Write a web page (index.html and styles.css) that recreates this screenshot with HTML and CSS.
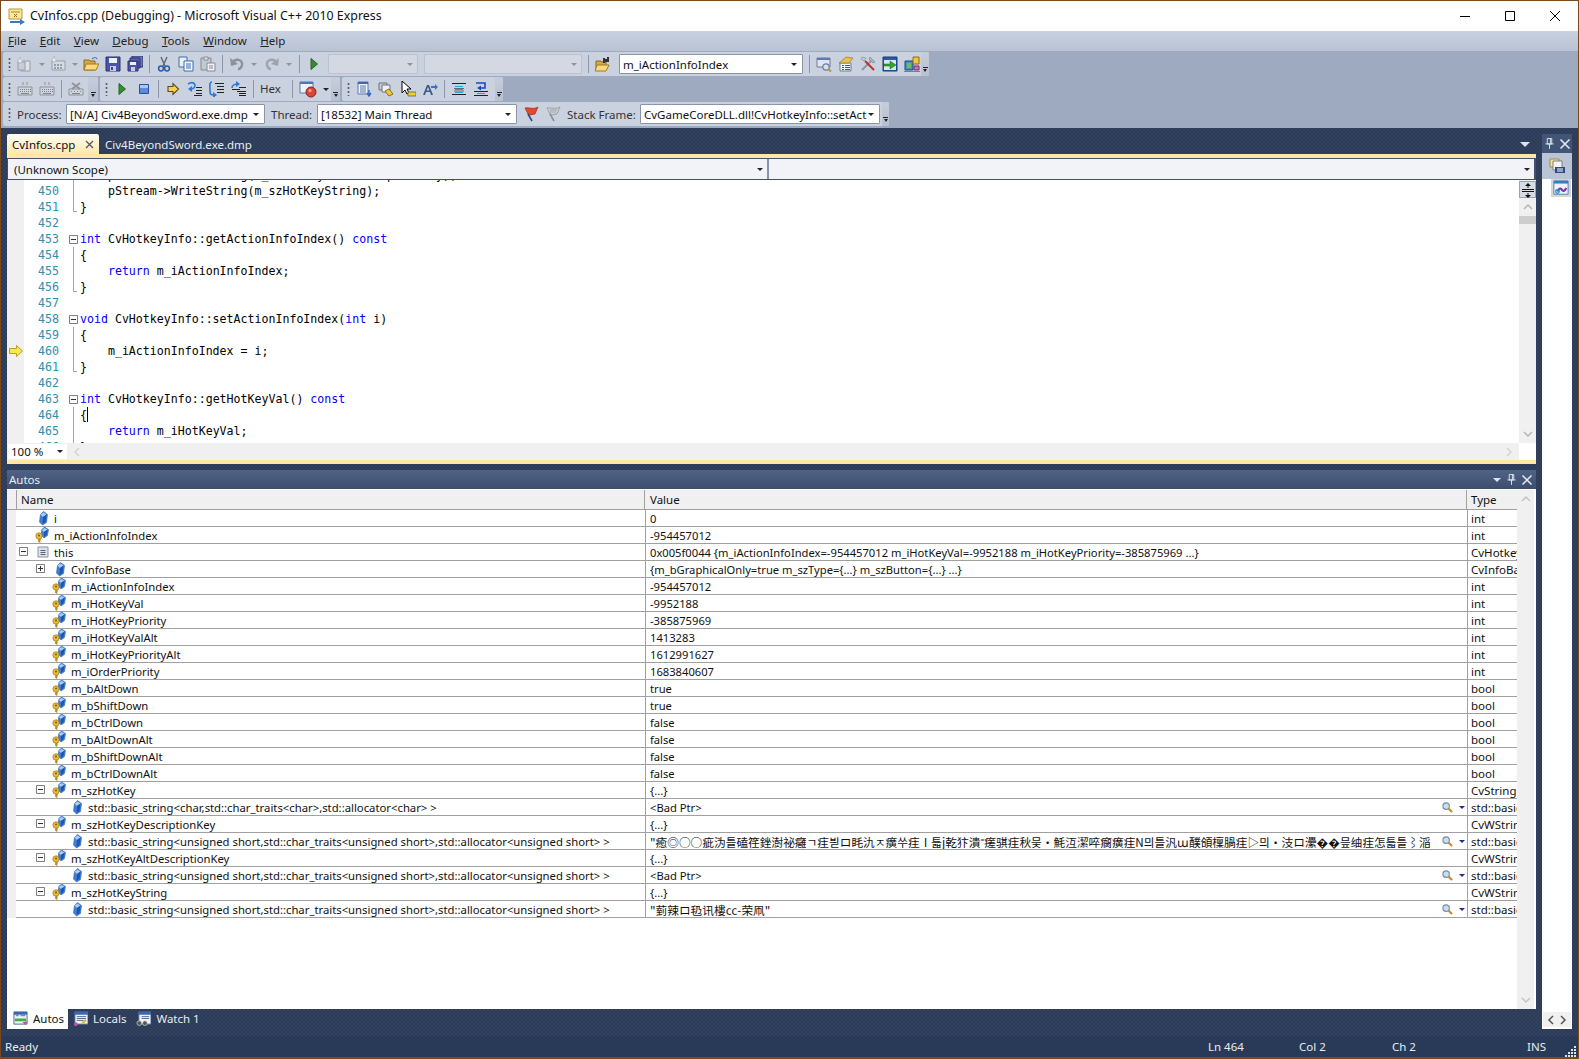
FILE: index.html
```html
<!DOCTYPE html>
<html lang="en">
<head>
<meta charset="utf-8">
<title>CvInfos.cpp (Debugging) - Microsoft Visual C++ 2010 Express</title>
<link rel="stylesheet" href="styles.css">
</head>
<body>
<svg class="defs" xmlns="http://www.w3.org/2000/svg">
  <symbol id="app" viewBox="0 0 18 18"><path d="M1 2h13v10H1z" fill="#f7e7a0" stroke="#b99a3a"/><path d="M3 4h9v2H3z" fill="#d8b84a"/><path d="M6 7l3 3M9 7l-3 3" stroke="#8a7020"/><path d="M2 14h10v-2l5 3-5 3v-2H2z" fill="#3a78c8"/></symbol>
  <symbol id="new" viewBox="0 0 16 16"><path d="M4 5h9v10H4z" fill="#e4e6ea" stroke="#8c929c"/><path d="M1 6h7v8H1z" fill="#c8ccd4" stroke="#8c929c"/><path d="M3 1l1 3 3 1-3 1-1 2-1-2-2-1 2-1z" fill="#f4f4f4" stroke="#9ea3ac" stroke-width=".5"/></symbol>
  <symbol id="add" viewBox="0 0 16 16"><path d="M2 5h13v9H2z" fill="#d9dce2" stroke="#8c929c"/><path d="M4 8h2v2H4zM7 8h2v2H7zM10 8h2v2h-2zM4 11h2v2H4zM7 11h2v2H7zM10 11h2v2h-2z" fill="#8c929c"/><path d="M4 0l1 3 2 1-2 1-1 2-1-2-2-1 2-1z" fill="#f4f4f4" stroke="#9ea3ac" stroke-width=".5"/></symbol>
  <symbol id="open" viewBox="0 0 16 16"><path d="M1 4h5l1 1h5v9H1z" fill="#d9a93c" stroke="#8a6a20"/><path d="M3 8h13l-3 6H1z" fill="#fbd978" stroke="#9a7a28"/><path d="M9 3c2-2 4-2 5 0" fill="none" stroke="#3a78c8" stroke-width="1.2"/></symbol>
  <symbol id="save" viewBox="0 0 16 16"><path d="M1 1h14v14H1z" fill="#4a55a8" stroke="#2b3270"/><path d="M4 2h8v5H4z" fill="#eef0f8"/><path d="M5 10h6v5H5z" fill="#c8cde0"/><path d="M6 11h2v3H6z" fill="#3a4490"/></symbol>
  <symbol id="saveall" viewBox="0 0 16 16"><path d="M5 0h11v11H5z" fill="#6a75b8" stroke="#2b3270"/><path d="M3 2h10v10H3z" fill="#5a65b0" stroke="#2b3270"/><path d="M1 5h10v10H1z" fill="#4a55a8" stroke="#2b3270"/><path d="M3 6h6v3H3z" fill="#eef0f8"/><path d="M4 11h4v4H4z" fill="#c8cde0"/></symbol>
  <symbol id="cut" viewBox="0 0 16 16"><path d="M5 1l4 9M11 1l-4 9" stroke="#5c6470" stroke-width="1.4" fill="none"/><circle cx="5" cy="12.5" r="2.4" fill="none" stroke="#2a5ca8" stroke-width="1.5"/><circle cx="11" cy="12.5" r="2.4" fill="none" stroke="#2a5ca8" stroke-width="1.5"/></symbol>
  <symbol id="copy" viewBox="0 0 16 16"><path d="M1 1h8v10H1z" fill="#e8f0fc" stroke="#3a6ab0"/><path d="M6 5h9v10H6z" fill="#f4f8ff" stroke="#3a6ab0"/><path d="M8 8h5M8 10h5M8 12h5" stroke="#3a6ab0"/></symbol>
  <symbol id="paste" viewBox="0 0 16 16"><path d="M1 2h10v12H1z" fill="#c4c8cf" stroke="#858a94"/><path d="M4 1h4v3H4z" fill="#e8e8e8" stroke="#858a94"/><path d="M7 7h8v8H7z" fill="#eff0f3" stroke="#858a94"/><path d="M9 10h4M9 12h4" stroke="#858a94"/></symbol>
  <symbol id="undo" viewBox="0 0 16 16"><path d="M3 7c3-5 11-4 10 2-.4 2-2 4-4 4" fill="none" stroke="#8c929c" stroke-width="2.4"/><path d="M1 2l1 8 7-2z" fill="#8c929c"/></symbol>
  <symbol id="redo" viewBox="0 0 16 16"><path d="M13 7C10 2 2 3 3 9c.4 2 2 4 4 4" fill="none" stroke="#9ea3ac" stroke-width="2.4"/><path d="M15 2l-1 8-7-2z" fill="#9ea3ac"/></symbol>
  <symbol id="play" viewBox="0 0 16 16"><path d="M5 2.500l6.500 5.500-6.500 5.500z" fill="#3a8a30" stroke="#1e6a20"/></symbol>
  <symbol id="stop" viewBox="0 0 16 16"><path d="M3.500 3.500h9v9h-9z" fill="#5a8ad8" stroke="#2a52a0"/><path d="M4 4h8v3H4z" fill="#a9c6f2"/></symbol>
  <symbol id="findf" viewBox="0 0 16 16"><path d="M1 5h5l1 1h4v8H1z" fill="#d9a93c" stroke="#8a6a20"/><path d="M2 9h12l-3 6H0z" fill="#fbd978" stroke="#9a7a28"/><path d="M8 2h2v5H8zM12 1h2v5h-2zM9 3h4v3H9z" fill="#333"/></symbol>
  <symbol id="t1" viewBox="0 0 16 16"><path d="M1 2h13v9H1z" fill="#dfe6f2" stroke="#6c7a96"/><path d="M1 2h13v2H1z" fill="#5a7ab0"/><circle cx="10" cy="11" r="3.200" fill="#cfe3f8" stroke="#6c7a96" stroke-width="1.200"/><path d="M12 13l3 2.500" stroke="#c09030" stroke-width="2"/></symbol>
  <symbol id="t2" viewBox="0 0 16 16"><path d="M2 7h11v8H2z" fill="#f4f6fa" stroke="#6c7a96"/><path d="M4 9h2v1H4zM7 9h5v1H7zM4 11h2v1H4zM7 11h5v1H7zM4 13h2v1H4zM7 13h5v1H7z" fill="#3a5a9a"/><path d="M1 7l7-6 7 1-4 5z" fill="#e8c050" stroke="#9a7a28" stroke-width=".7"/></symbol>
  <symbol id="t3" viewBox="0 0 16 16"><path d="M2 14L12 4" stroke="#8e96a4" stroke-width="2"/><path d="M10 1l5 5-2 1-4-4z" fill="#aeb4c0" stroke="#6c7480" stroke-width=".5"/><path d="M14 14L5 5" stroke="#c0302a" stroke-width="2"/><path d="M2 1l4 1-2 3-3-2z" fill="#c8ccd4" stroke="#6c7480" stroke-width=".5"/></symbol>
  <symbol id="t4" viewBox="0 0 16 16"><path d="M1 1h14v14H1z" fill="#2a5aa8" stroke="#1a3a78"/><path d="M2 4h12v10H2z" fill="#dbe6f6"/><path d="M2 8h6V5l6 4-6 4v-3H2z" fill="#2aa82a" stroke="#156a15" stroke-width=".5"/></symbol>
  <symbol id="t5" viewBox="0 0 16 16"><path d="M1 5h8v9H1z" fill="#4a90c8" stroke="#1a4a7a"/><path d="M3 7h4v5H3z" fill="#70c050"/><path d="M9 1h6v7H9z" fill="#f0c840" stroke="#8a6a18"/><path d="M10 10h5v4h-5z" fill="#d070c0" stroke="#7a2a78"/><path d="M0 15h16v1H0z" fill="#7a8088"/></symbol>
  <symbol id="kb" viewBox="0 0 16 16"><path d="M1 6h14v8H1z" fill="#d2d5dc" stroke="#8c929c"/><path d="M3 8h1v1H3zM5 8h1v1H5zM7 8h1v1H7zM9 8h1v1H9zM11 8h1v1h-1zM13 8h1v1h-1zM3 10h1v1H3zM5 10h1v1H5zM7 10h1v1H7zM9 10h1v1H9zM11 10h1v1h-1zM13 10h1v1h-1zM4 12h8v1H4z" fill="#7e848e"/><path d="M5 1h2v3H5zM9 1h2v3H9z" fill="#aeb2ba"/></symbol>
  <symbol id="kbx" viewBox="0 0 16 16"><path d="M1 8h14v6H1z" fill="#d2d5dc" stroke="#8c929c"/><path d="M3 10h1v1H3zM6 10h1v1H6zM9 10h1v1H9zM12 10h1v1h-1zM4 12h8v1H4z" fill="#7e848e"/><path d="M4 2l8 6M12 2L4 8" stroke="#8e939c" stroke-width="1.800"/></symbol>
  <symbol id="next" viewBox="0 0 16 16"><path d="M3 5.500h5V2.500L13.500 8 8 13.500V10.500H3z" fill="#f6d050" stroke="#5a4a20" stroke-width="1.100"/></symbol>
  <symbol id="stepin" viewBox="0 0 16 16"><path d="M1 3c3-2 6-2 7 1 0 3-2 4-5 4" fill="none" stroke="#2a78d8" stroke-width="1.600"/><path d="M1 8l4-3v6z" fill="#2a78d8"/><path d="M9 6h6v1H9zM9 9h6v1H9zM9 12h6v1H9zM7 14h8v1H7z" fill="#222"/></symbol>
  <symbol id="stepover" viewBox="0 0 16 16"><path d="M3 1C0 1 1 5 1 9s0 5 4 5" fill="none" stroke="#2a78d8" stroke-width="1.600"/><path d="M8 14l-4-3v6z" fill="#2a78d8"/><path d="M6 2h9v1H6zM8 5h7v1H8zM8 8h7v1H8zM8 11h7v1H8z" fill="#222"/></symbol>
  <symbol id="stepout" viewBox="0 0 16 16"><path d="M1 7c0-3 3-4 6-4" fill="none" stroke="#2a78d8" stroke-width="1.600"/><path d="M9 3L5 0v6z" fill="#2a78d8"/><path d="M1 8h8v1H1zM8 6h7v1H8zM6 10h9v1H6zM8 12h7v1H8zM8 14h7v1H8z" fill="#222"/></symbol>
  <symbol id="bp" viewBox="0 0 18 18"><path d="M1 2h13v11H1z" fill="#eef2fa" stroke="#5a78a8"/><path d="M1 2h13v2H1z" fill="#4a78c0"/><circle cx="12" cy="12" r="5" fill="#d84838" stroke="#8a2018"/><circle cx="11" cy="10.500" r="1.600" fill="#f2a090"/></symbol>
  <symbol id="m1" viewBox="0 0 16 16"><path d="M2 1h10v12H2z" fill="#eef3fb" stroke="#5a78a8"/><path d="M2 1h10v2H2z" fill="#3a68b0"/><path d="M4 5h6M4 7h6M4 9h6M4 11h6" stroke="#5a78a8"/><path d="M13 9v5M11 12l2 3 2-3" fill="none" stroke="#2a68c8" stroke-width="1.400"/></symbol>
  <symbol id="m2" viewBox="0 0 16 16"><path d="M1 2h8v7H1z" fill="#c8ccd6" stroke="#6c7480"/><path d="M4 4h8v7H4z" fill="#eef0f4" stroke="#6c7480"/><path d="M7 10l4-2 4 5-4 2z" fill="#f0c840" stroke="#8a6a18"/></symbol>
  <symbol id="m3" viewBox="0 0 16 16"><path d="M2 0l9 8H7l2 4-2 1-2-4-3 3z" fill="#fff" stroke="#000" stroke-width="1"/><path d="M8 11h8v4H8z" fill="#f0d020" stroke="#555" stroke-width=".7"/></symbol>
  <symbol id="m4" viewBox="0 0 16 16"><path d="M1 14L5 4h2l4 10H9l-1-3H4l-1 3zM4.600 9.500h2.800L6 6z" fill="#3a5a8a"/><path d="M9 5h4V3l3 3-3 3V7H9z" fill="#2a78d8"/></symbol>
  <symbol id="m5" viewBox="0 0 16 16"><path d="M1 2h14v1H1zM1 13h14v1H1z" fill="#222"/><path d="M4 5h8v1H4zM4 8h8v1H4zM4 11h8v1H4z" fill="#1aa8d8"/><path d="M3 7h10v1H3zM3 9.500h10v1H3z" fill="#222" opacity=".6"/></symbol>
  <symbol id="m6" viewBox="0 0 16 16"><path d="M3 2h9v5H8" fill="none" stroke="#1a4ac0" stroke-width="1.600"/><path d="M8 4.500v5L4 7z" fill="#1a4ac0"/><path d="M1 10h14v1H1zM1 14h14v1H1z" fill="#222"/><path d="M4 12h8v1H4z" fill="#1aa8d8"/></symbol>
  <symbol id="flag" viewBox="0 0 16 16"><path d="M2 2c4-1 8 2 13-1l-3 7-5 1-2-1z" fill="#e04a30" stroke="#a02818" stroke-width=".7"/><path d="M5 8l4 7" stroke="#2a4a80" stroke-width="1.600"/></symbol>
  <symbol id="flag2" viewBox="0 0 16 16"><path d="M2 2c4-1 8 2 13-1l-3 7-5 1-2-1z" fill="#ccd0d6" stroke="#8a8f98" stroke-width=".7"/><path d="M5 8l4 7" stroke="#8a8f98" stroke-width="1.600"/><path d="M5 4l7 0M5 6l6 0" stroke="#a0a4ac"/></symbol>
  <symbol id="var" viewBox="0 0 16 16"><path d="M8.500 1.500l4 3-1 8-4 2.500-3-3 1-7.500z" fill="#3f7fd6" stroke="#2a5fb0" stroke-width=".6"/><path d="M8.500 2.500l3 2-3.500 2.500-2.500-2.500z" fill="#a9cdf6"/><path d="M8 7l3.500-2.500-1 7.500L7.500 14z" fill="#1f55ac"/></symbol>
  <symbol id="vark" viewBox="0 0 16 16"><path d="M9.500 0l4 2.500-1 6-3.500 2.500-3-3 .8-5.500z" fill="#3f7fd6" stroke="#2a5fb0" stroke-width=".6"/><path d="M9.500 1l3 1.500-3.500 2.500-2.200-2z" fill="#a9cdf6"/><path d="M9 5l3.500-2.500-1 5.500-2.500 2z" fill="#1f55ac"/><circle cx="4" cy="9" r="3.200" fill="#e8bc3c" stroke="#a07a18" stroke-width=".7"/><path d="M3 11.500h2v3.500H3z" fill="#c89c28"/><path d="M4 13h2M4 15h1.500" stroke="#a07a18"/><circle cx="4" cy="8.500" r="1" fill="#7a5a10"/></symbol>
  <symbol id="thisi" viewBox="0 0 16 16"><path d="M3 3h10v10H3z" fill="#dfe2e9" stroke="#8c93a3"/><path d="M5.500 6.500h5M5.500 8.500h5M5.500 10.500h5" stroke="#5a6478"/></symbol>
  <symbol id="boxm" viewBox="0 0 9 9"><path d="M.5.500h8v8h-8z" fill="#fafbfc" stroke="#7f7f7f"/><path d="M2 4.500h5" stroke="#333"/></symbol>
  <symbol id="boxp" viewBox="0 0 9 9"><path d="M.5.500h8v8h-8z" fill="#fafbfc" stroke="#7f7f7f"/><path d="M2 4.500h5M4.500 2v5" stroke="#333"/></symbol>
  <symbol id="mag" viewBox="0 0 12 12"><circle cx="4.500" cy="4.500" r="3.500" fill="#c8dff2" stroke="#7c8ca0" stroke-width="1.200"/><path d="M7 7l4 4" stroke="#c08e20" stroke-width="2.200"/></symbol>
  <symbol id="autos" viewBox="0 0 16 16"><path d="M1 1h14v13H1z" fill="#eef3fb" stroke="#4a6a98"/><path d="M1 1h14v3H1z" fill="#3a68b0"/><path d="M2 8h12v3H2z" fill="#40b040"/><path d="M3 5h3M8 5h5" stroke="#4a6a98"/><path d="M10 12l3 3 3-4z" fill="#c050b0"/></symbol>
  <symbol id="locals" viewBox="0 0 16 16"><path d="M2 1h14v13H2z" fill="#eef3fb" stroke="#4a6a98"/><path d="M2 1h14v3H2z" fill="#3a68b0"/><path d="M4 6h10M4 8h10M4 10h10" stroke="#4a6a98"/><path d="M9 12l3-3 2 2-3 3z" fill="#e8bc3c"/><circle cx="3" cy="14" r="2" fill="#c050b0"/></symbol>
  <symbol id="watch" viewBox="0 0 16 16"><path d="M3 1h13v13H3z" fill="#eef3fb" stroke="#4a6a98"/><path d="M3 1h13v3H3z" fill="#3a68b0"/><path d="M6 6h8M6 8h8" stroke="#4a6a98"/><circle cx="3.500" cy="13" r="2.500" fill="#555" stroke="#ddd" stroke-width=".7"/><circle cx="9.500" cy="13" r="2.500" fill="#555" stroke="#ddd" stroke-width=".7"/></symbol>
  <symbol id="sv" viewBox="0 0 16 16"><path d="M1 1h9v8H1z" fill="#f6e2a0" stroke="#a08a40"/><path d="M4 3h9v9H4z" fill="#f4f4f4" stroke="#7a8088"/><path d="M6 9h10v6H6z" fill="#2a4a80"/><path d="M8 11h6M8 13h6" stroke="#fff"/></symbol>
  <symbol id="cv" viewBox="0 0 18 18"><path d="M1 1h16v15H1z" fill="#eef3fb" stroke="#4a78b8"/><path d="M1 1h16v3H1z" fill="#3a78c8"/><path d="M5 13c2-4 4-4 5-2s3 2 5-2" fill="none" stroke="#7a3ab8" stroke-width="2.500"/><circle cx="5" cy="13" r="2" fill="none" stroke="#2a90d8" stroke-width="1.500"/></symbol>
</svg>

<div class="window">
  <header class="titlebar">
    <svg class="ic-app"><use href="#app"/></svg>
    <span class="title">CvInfos.cpp (Debugging) - Microsoft Visual C++ 2010 Express</span>
    <div class="winbtns">
      <svg class="wb" viewBox="0 0 10 10"><path d="M0 5.500h10" stroke="#000"/></svg>
      <svg class="wb" viewBox="0 0 10 10"><path d="M.5.500h9v9h-9z" fill="none" stroke="#000"/></svg>
      <svg class="wb" viewBox="0 0 10 10"><path d="M0 0l10 10M10 0L0 10" stroke="#000"/></svg>
    </div>
  </header>

  <nav class="menubar">
    <span class="mi"><u>F</u>ile</span><span class="mi"><u>E</u>dit</span><span class="mi"><u>V</u>iew</span><span class="mi"><u>D</u>ebug</span><span class="mi"><u>T</u>ools</span><span class="mi"><u>W</u>indow</span><span class="mi"><u>H</u>elp</span>
  </nav>

  <div class="toolarea">
    <div class="tbrow">
      <div class="tb">
        <i class="grip"></i>
        <svg class="ti dis"><use href="#new"/></svg><i class="dd dis-dd"></i>
        <svg class="ti dis"><use href="#add"/></svg><i class="dd dis-dd"></i>
        <svg class="ti"><use href="#open"/></svg>
        <svg class="ti"><use href="#save"/></svg>
        <svg class="ti"><use href="#saveall"/></svg>
        <i class="sep"></i>
        <svg class="ti"><use href="#cut"/></svg>
        <svg class="ti"><use href="#copy"/></svg>
        <svg class="ti"><use href="#paste"/></svg>
        <i class="sep"></i>
        <svg class="ti"><use href="#undo"/></svg><i class="dd dis-dd wide"></i>
        <svg class="ti"><use href="#redo"/></svg><i class="dd dis-dd wide"></i>
        <i class="sep"></i>
        <svg class="ti"><use href="#play"/></svg>
        <div class="combo off w90"><span class="ctext"></span><i class="dd dis-dd"></i></div>
        <div class="combo off w158"><span class="ctext"></span><i class="dd dis-dd"></i></div>
        <i class="sep"></i>
        <svg class="ti"><use href="#findf"/></svg>
        <div class="combo w184"><span class="ctext">m_iActionInfoIndex</span><i class="dd"></i></div>
        <i class="sep"></i>
        <svg class="ti"><use href="#t1"/></svg>
        <svg class="ti"><use href="#t2"/></svg>
        <svg class="ti"><use href="#t3"/></svg>
        <svg class="ti"><use href="#t4"/></svg>
        <svg class="ti"><use href="#t5"/></svg>
        <i class="over ov8"></i>
      </div>
    </div>
    <div class="tbrow">
      <div class="tb">
        <i class="grip"></i>
        <svg class="ti"><use href="#kb"/></svg>
        <svg class="ti"><use href="#kb"/></svg>
        <i class="sep"></i>
        <svg class="ti"><use href="#kbx"/></svg>
        <i class="over ov10"></i>
      </div>
      <div class="tb">
        <i class="grip"></i>
        <svg class="ti"><use href="#play"/></svg>
        <svg class="ti"><use href="#stop"/></svg>
        <i class="sep"></i>
        <svg class="ti"><use href="#next"/></svg>
        <svg class="ti"><use href="#stepin"/></svg>
        <svg class="ti"><use href="#stepover"/></svg>
        <svg class="ti"><use href="#stepout"/></svg>
        <i class="sep"></i>
        <span class="hex">Hex</span>
        <i class="sep"></i>
        <svg class="ti wide18"><use href="#bp"/></svg><i class="dd"></i>
        <i class="over ov9"></i>
      </div>
      <div class="tb">
        <i class="grip"></i>
        <svg class="ti"><use href="#m1"/></svg>
        <svg class="ti"><use href="#m2"/></svg>
        <svg class="ti"><use href="#m3"/></svg>
        <svg class="ti"><use href="#m4"/></svg>
        <i class="sep"></i>
        <svg class="ti"><use href="#m5"/></svg>
        <svg class="ti"><use href="#m6"/></svg>
        <i class="over ov8b"></i>
      </div>
    </div>
    <div class="tbrow">
      <div class="tb">
        <i class="grip"></i>
        <span class="lbl w43">Process:</span>
        <div class="combo w199"><span class="ctext">[N/A] Civ4BeyondSword.exe.dmp</span><i class="dd"></i></div>
        <span class="lbl w40">Thread:</span>
        <div class="combo w200"><span class="ctext">[18532] Main Thread</span><i class="dd"></i></div>
        <svg class="ti"><use href="#flag"/></svg>
        <svg class="ti"><use href="#flag2"/></svg>
        <span class="lbl w67">Stack Frame:</span>
        <div class="combo w240"><span class="ctext">CvGameCoreDLL.dll!CvHotkeyInfo::setAct</span><i class="dd"></i></div>
        <i class="over ov7"></i>
      </div>
    </div>
  </div>

  <div class="workspace">
    <main class="maincol">
      <div class="doctabs">
        <div class="doctab on"><span>CvInfos.cpp</span><svg class="tabx" viewBox="0 0 9 9"><path d="M1 1l7 7M8 1L1 8" stroke="#55575c" stroke-width="1.300"/></svg></div>
        <div class="doctab"><span>Civ4BeyondSword.exe.dmp</span></div>
        <i class="tri"></i>
      </div>
      <div class="yline"></div>
      <div class="scope">
        <div class="scopecell s1"><span>(Unknown Scope)</span><i class="dd"></i></div>
        <div class="scopecell s2"><span></span><i class="dd"></i></div>
      </div>
      <section class="editor">
        <div class="codepane">
          <div class="lines">
            <div class="ln"><i class="mark"></i><span class="num">449</span><i class="fold fl"></i><span class="src">    pStream-&gt;WriteString(m_szHotKeyAltDescriptionKey);</span></div>
            <div class="ln"><i class="mark"></i><span class="num">450</span><i class="fold fl"></i><span class="src">    pStream-&gt;WriteString(m_szHotKeyString);</span></div>
            <div class="ln"><i class="mark"></i><span class="num">451</span><i class="fold fe"></i><span class="src">}</span></div>
            <div class="ln"><i class="mark"></i><span class="num">452</span><i class="fold"></i><span class="src"></span></div>
            <div class="ln"><i class="mark"></i><span class="num">453</span><i class="fold"><svg class="foldbox"><use href="#boxm"/></svg></i><span class="src"><b>int</b> CvHotkeyInfo::getActionInfoIndex() <b>const</b></span></div>
            <div class="ln"><i class="mark"></i><span class="num">454</span><i class="fold fl"></i><span class="src">{</span></div>
            <div class="ln"><i class="mark"></i><span class="num">455</span><i class="fold fl"></i><span class="src">    <b>return</b> m_iActionInfoIndex;</span></div>
            <div class="ln"><i class="mark"></i><span class="num">456</span><i class="fold fe"></i><span class="src">}</span></div>
            <div class="ln"><i class="mark"></i><span class="num">457</span><i class="fold"></i><span class="src"></span></div>
            <div class="ln"><i class="mark"></i><span class="num">458</span><i class="fold"><svg class="foldbox"><use href="#boxm"/></svg></i><span class="src"><b>void</b> CvHotkeyInfo::setActionInfoIndex(<b>int</b> i)</span></div>
            <div class="ln"><i class="mark"></i><span class="num">459</span><i class="fold fl"></i><span class="src">{</span></div>
            <div class="ln"><i class="mark"><svg class="cur" viewBox="0 0 14 12"><path d="M.5 3.500h7V.5l6 5.500-6 5.500v-3h-7z" fill="#f8e850" stroke="#b8a020"/></svg></i><span class="num">460</span><i class="fold fl"></i><span class="src">    m_iActionInfoIndex = i;</span></div>
            <div class="ln"><i class="mark"></i><span class="num">461</span><i class="fold fe"></i><span class="src">}</span></div>
            <div class="ln"><i class="mark"></i><span class="num">462</span><i class="fold"></i><span class="src"></span></div>
            <div class="ln"><i class="mark"></i><span class="num">463</span><i class="fold"><svg class="foldbox"><use href="#boxm"/></svg></i><span class="src"><b>int</b> CvHotkeyInfo::getHotKeyVal() <b>const</b></span></div>
            <div class="ln"><i class="mark"></i><span class="num">464</span><i class="fold fl"></i><span class="src">{<i class="caret"></i></span></div>
            <div class="ln"><i class="mark"></i><span class="num">465</span><i class="fold fl"></i><span class="src">    <b>return</b> m_iHotKeyVal;</span></div>
            <div class="ln"><i class="mark"></i><span class="num">466</span><i class="fold fe"></i><span class="src">}</span></div>
          </div>
          <div class="vscroll">
            <div class="split"><svg viewBox="0 0 12 14"><path d="M0 6.500h12M0 8.500h12" stroke="#111"/><path d="M6 0l3 3H3zM6 15l3-3H3z" fill="#111"/><path d="M6 2v3M6 10v3" stroke="#111"/></svg></div>
            <svg class="chev" viewBox="0 0 10 6"><path d="M1 5l4-4 4 4" fill="none" stroke="#b5b5b5" stroke-width="1.500"/></svg>
            <i class="thumb"></i>
            <span class="grow"></span>
            <svg class="chev" viewBox="0 0 10 6"><path d="M1 1l4 4 4-4" fill="none" stroke="#b5b5b5" stroke-width="1.500"/></svg>
          </div>
        </div>
        <div class="edfoot">
          <div class="zoom"><span>100 %</span><i class="dd"></i></div>
          <div class="hscroll">
            <svg class="chevh" viewBox="0 0 6 10"><path d="M5 1L1 5l4 4" fill="none" stroke="#d4d4d4" stroke-width="1.500"/></svg>
            <svg class="chevh" viewBox="0 0 6 10"><path d="M1 1l4 4-4 4" fill="none" stroke="#d4d4d4" stroke-width="1.500"/></svg>
          </div>
          <i class="corner"></i>
        </div>
      </section>
      <div class="yline"></div>

      <section class="autos">
        <div class="paneltitle">
          <span>Autos</span>
          <i class="tri"></i>
          <svg class="pin" viewBox="0 0 10 12"><path d="M2.500.5h5v6h-5zM.5 6.500h9M5 6.500V12M6 1v5" fill="none" stroke="#e8edf4"/></svg>
          <svg class="px" viewBox="0 0 10 10"><path d="M.5.5l9 9M9.500.5l-9 9" stroke="#e8edf4" stroke-width="1.500"/></svg>
        </div>
        <div class="treewrap">
          <div class="tree">
            <div class="thead"><span class="tn">Name</span><span class="tv">Value</span><span class="tt">Type</span></div>
            <div class="row"><div class="cn d0"><i class="ex"></i><svg class="vi"><use href="#var"/></svg><span>i</span></div><div class="cv"><span class="vt">0</span></div><div class="ct">int</div></div>
            <div class="row"><div class="cn d0"><i class="ex"></i><svg class="vi"><use href="#vark"/></svg><span>m_iActionInfoIndex</span></div><div class="cv"><span class="vt">-954457012</span></div><div class="ct">int</div></div>
            <div class="row"><div class="cn d0"><i class="ex"><svg class="bx"><use href="#boxm"/></svg></i><svg class="vi"><use href="#thisi"/></svg><span>this</span></div><div class="cv"><span class="vt">0x005f0044 {m_iActionInfoIndex=-954457012 m_iHotKeyVal=-9952188 m_iHotKeyPriority=-385875969 ...}</span></div><div class="ct">CvHotkeyInfo * const</div></div>
            <div class="row"><div class="cn d1"><i class="ex"><svg class="bx"><use href="#boxp"/></svg></i><svg class="vi"><use href="#var"/></svg><span>CvInfoBase</span></div><div class="cv"><span class="vt">{m_bGraphicalOnly=true m_szType={...} m_szButton={...} ...}</span></div><div class="ct">CvInfoBase</div></div>
            <div class="row"><div class="cn d1"><i class="ex"></i><svg class="vi"><use href="#vark"/></svg><span>m_iActionInfoIndex</span></div><div class="cv"><span class="vt">-954457012</span></div><div class="ct">int</div></div>
            <div class="row"><div class="cn d1"><i class="ex"></i><svg class="vi"><use href="#vark"/></svg><span>m_iHotKeyVal</span></div><div class="cv"><span class="vt">-9952188</span></div><div class="ct">int</div></div>
            <div class="row"><div class="cn d1"><i class="ex"></i><svg class="vi"><use href="#vark"/></svg><span>m_iHotKeyPriority</span></div><div class="cv"><span class="vt">-385875969</span></div><div class="ct">int</div></div>
            <div class="row"><div class="cn d1"><i class="ex"></i><svg class="vi"><use href="#vark"/></svg><span>m_iHotKeyValAlt</span></div><div class="cv"><span class="vt">1413283</span></div><div class="ct">int</div></div>
            <div class="row"><div class="cn d1"><i class="ex"></i><svg class="vi"><use href="#vark"/></svg><span>m_iHotKeyPriorityAlt</span></div><div class="cv"><span class="vt">1612991627</span></div><div class="ct">int</div></div>
            <div class="row"><div class="cn d1"><i class="ex"></i><svg class="vi"><use href="#vark"/></svg><span>m_iOrderPriority</span></div><div class="cv"><span class="vt">1683840607</span></div><div class="ct">int</div></div>
            <div class="row"><div class="cn d1"><i class="ex"></i><svg class="vi"><use href="#vark"/></svg><span>m_bAltDown</span></div><div class="cv"><span class="vt">true</span></div><div class="ct">bool</div></div>
            <div class="row"><div class="cn d1"><i class="ex"></i><svg class="vi"><use href="#vark"/></svg><span>m_bShiftDown</span></div><div class="cv"><span class="vt">true</span></div><div class="ct">bool</div></div>
            <div class="row"><div class="cn d1"><i class="ex"></i><svg class="vi"><use href="#vark"/></svg><span>m_bCtrlDown</span></div><div class="cv"><span class="vt">false</span></div><div class="ct">bool</div></div>
            <div class="row"><div class="cn d1"><i class="ex"></i><svg class="vi"><use href="#vark"/></svg><span>m_bAltDownAlt</span></div><div class="cv"><span class="vt">false</span></div><div class="ct">bool</div></div>
            <div class="row"><div class="cn d1"><i class="ex"></i><svg class="vi"><use href="#vark"/></svg><span>m_bShiftDownAlt</span></div><div class="cv"><span class="vt">false</span></div><div class="ct">bool</div></div>
            <div class="row"><div class="cn d1"><i class="ex"></i><svg class="vi"><use href="#vark"/></svg><span>m_bCtrlDownAlt</span></div><div class="cv"><span class="vt">false</span></div><div class="ct">bool</div></div>
            <div class="row"><div class="cn d1"><i class="ex"><svg class="bx"><use href="#boxm"/></svg></i><svg class="vi"><use href="#vark"/></svg><span>m_szHotKey</span></div><div class="cv"><span class="vt">{...}</span></div><div class="ct">CvString</div></div>
            <div class="row"><div class="cn d2"><i class="ex"></i><svg class="vi"><use href="#var"/></svg><span>std::basic_string&lt;char,std::char_traits&lt;char&gt;,std::allocator&lt;char&gt; &gt;</span></div><div class="cv"><span class="vt">&lt;Bad Ptr&gt;</span><svg class="mg"><use href="#mag"/></svg><i class="dv"></i></div><div class="ct">std::basic_string</div></div>
            <div class="row"><div class="cn d1"><i class="ex"><svg class="bx"><use href="#boxm"/></svg></i><svg class="vi"><use href="#vark"/></svg><span>m_szHotKeyDescriptionKey</span></div><div class="cv"><span class="vt">{...}</span></div><div class="ct">CvWString</div></div>
            <div class="row"><div class="cn d2"><i class="ex"></i><svg class="vi"><use href="#var"/></svg><span>std::basic_string&lt;unsigned short,std::char_traits&lt;unsigned short&gt;,std::allocator&lt;unsigned short&gt; &gt;</span></div><div class="cv"><span class="vt cjk">"癒◎○○疵沩틀磕䇮銼澍祕癰ㄱ疰븯ロ眊氿ㅈ癀쑤疰Ⅰ틃j乾犿潰⁼瘥骐疰秋믗·魹沍潔啐瘸癀疰N믜틀汎ա醭頜檁腡疰▷믜·汥ロ㶟��믚䌷疰怎틃틀⌇㴞</span><svg class="mg"><use href="#mag"/></svg><i class="dv"></i></div><div class="ct">std::basic_string</div></div>
            <div class="row"><div class="cn d1"><i class="ex"><svg class="bx"><use href="#boxm"/></svg></i><svg class="vi"><use href="#vark"/></svg><span>m_szHotKeyAltDescriptionKey</span></div><div class="cv"><span class="vt">{...}</span></div><div class="ct">CvWString</div></div>
            <div class="row"><div class="cn d2"><i class="ex"></i><svg class="vi"><use href="#var"/></svg><span>std::basic_string&lt;unsigned short,std::char_traits&lt;unsigned short&gt;,std::allocator&lt;unsigned short&gt; &gt;</span></div><div class="cv"><span class="vt">&lt;Bad Ptr&gt;</span><svg class="mg"><use href="#mag"/></svg><i class="dv"></i></div><div class="ct">std::basic_string</div></div>
            <div class="row"><div class="cn d1"><i class="ex"><svg class="bx"><use href="#boxm"/></svg></i><svg class="vi"><use href="#vark"/></svg><span>m_szHotKeyString</span></div><div class="cv"><span class="vt">{...}</span></div><div class="ct">CvWString</div></div>
            <div class="row"><div class="cn d2"><i class="ex"></i><svg class="vi"><use href="#var"/></svg><span>std::basic_string&lt;unsigned short,std::char_traits&lt;unsigned short&gt;,std::allocator&lt;unsigned short&gt; &gt;</span></div><div class="cv"><span class="vt cjk">"菿辣ロ㲌讯樓㏄-荣凧"</span><svg class="mg"><use href="#mag"/></svg><i class="dv"></i></div><div class="ct">std::basic_string</div></div>
          </div>
          <div class="vscroll tall">
            <svg class="chev" viewBox="0 0 10 6"><path d="M1 5l4-4 4 4" fill="none" stroke="#c4c4c4" stroke-width="1.500"/></svg>
            <span class="grow"></span>
            <svg class="chev" viewBox="0 0 10 6"><path d="M1 1l4 4 4-4" fill="none" stroke="#c4c4c4" stroke-width="1.500"/></svg>
          </div>
        </div>
        <div class="paneltabs">
          <div class="ptab on"><svg class="pi"><use href="#autos"/></svg><span>Autos</span></div>
          <div class="ptab"><svg class="pi"><use href="#locals"/></svg><span>Locals</span></div>
          <div class="ptab"><svg class="pi"><use href="#watch"/></svg><span>Watch 1</span></div>
        </div>
      </section>
    </main>

    <aside class="sidebar">
      <div class="sidehead">
        <svg class="pin" viewBox="0 0 10 12"><path d="M2.500.5h5v6h-5zM.5 6.500h9M5 6.500V12M6 1v5" fill="none" stroke="#e8edf4"/></svg>
        <svg class="px" viewBox="0 0 10 10"><path d="M.5.5l9 9M9.500.5l-9 9" stroke="#e8edf4" stroke-width="1.500"/></svg>
      </div>
      <div class="sidesel"><svg class="si"><use href="#sv"/></svg></div>
      <div class="sidecv"><svg class="si2"><use href="#cv"/></svg></div>
      <span class="grow"></span>
      <div class="sidenav">
        <svg class="chevh dark" viewBox="0 0 6 10"><path d="M5 1L1 5l4 4" fill="none" stroke="#555" stroke-width="1.500"/></svg>
        <svg class="chevh dark" viewBox="0 0 6 10"><path d="M1 1l4 4-4 4" fill="none" stroke="#555" stroke-width="1.500"/></svg>
      </div>
    </aside>
  </div>

  <footer class="status">
    <span class="st-ready">Ready</span>
    <span class="st s-ln">Ln 464</span>
    <span class="st s-col">Col 2</span>
    <span class="st s-ch">Ch 2</span>
    <span class="st s-ins">INS</span>
    <svg class="st-grip" viewBox="0 0 12 12"><path d="M9 1h2v2H9zM6 4h2v2H6zM9 4h2v2H9zM3 7h2v2H3zM6 7h2v2H6zM9 7h2v2H9zM0 10h2v2H0zM3 10h2v2H3zM6 10h2v2H6zM9 10h2v2H9z" fill="#dfe4ec"/></svg>
  </footer>
</div>
</body>
</html>
```

FILE: styles.css
```css
* { box-sizing: border-box; }
html, body { margin: 0; padding: 0; }
body {
  width: 1579px;
  height: 1059px;
  overflow: hidden;
  font-family: "Noto Sans", "Noto Sans CJK SC", sans-serif;
  font-size: 11.5px;
  line-height: 17px;
  color: #111;
  background: #2b3a58;
}
i { font-style: normal; display: block; flex: none; }
svg { display: block; flex: none; overflow: visible; }
.defs { width: 0; height: 0; position: absolute; }
.grow { flex: 1; display: block; }

.window {
  width: 1579px;
  height: 1059px;
  display: flex;
  flex-direction: column;
  border: 1px solid #7a4a1e;
  border-width: 1px 1px 2px 1px;
  background-color: #2b3b59;
  background-image: conic-gradient(#32425f 25%, #2a3a57 0 50%, #32425f 0 75%, #2a3a57 0);
  background-size: 4px 4px;
}

/* title bar */
.titlebar {
  height: 30px;
  flex: none;
  background: #fff;
  display: flex;
  align-items: center;
  padding: 0 0 1px 7px;
}
.ic-app { width: 18px; height: 18px; margin-right: 4px; }
.title { color: #111; font-size: 12.4px; }
.winbtns { margin-left: auto; display: flex; gap: 35px; padding-right: 18px; }
.wb { width: 10px; height: 10px; }

/* menu */
.menubar {
  height: 20px;
  flex: none;
  display: flex;
  align-items: center;
  gap: 13.4px;
  padding: 0 0 2px 7px;
  background: linear-gradient(#c9d1e0, #b9c3d4);
  color: #222;
}
.mi { display: block; }

/* toolbars */
.toolarea {
  height: 77px;
  flex: none;
  background: #9daac0;
  padding-top: 1px;
  display: flex;
  flex-direction: column;
  gap: 1px;
}
.tbrow { display: flex; height: 24px; padding-left: 2px; gap: 2px; }
.tb {
  display: flex;
  align-items: center;
  gap: 6px;
  padding-left: 5px;
  background: #cbd2df;
  border-radius: 2px;
  height: 24px;
  color: #333;
}
.grip {
  width: 3px;
  height: 14px;
  background-image: radial-gradient(#555f70 1px, transparent 1.1px);
  background-size: 3px 4px;
}
.ti { width: 16px; height: 16px; }
.ti.dis { opacity: .8; }
.ti.wide18 { width: 18px; height: 18px; }
.sep { width: 1px; height: 18px; background: #8d97a9; }
.dd {
  width: 0; height: 0;
  border: 3px solid transparent;
  border-top: 3px solid #222;
  border-bottom-width: 0;
}
.dd.dis-dd { border-top-color: #8e949e; margin-right: -1px; }
.dd.dis-dd.wide { margin-right: 1px; }
.combo {
  height: 20px;
  background: #fff;
  border: 1px solid #8a94a8;
  border-radius: 1px;
  display: flex;
  align-items: center;
  padding: 0 5px 0 3px;
  color: #111;
}
.combo.off { background: #d3d8e3; border-color: #bcc3d0; }
.ctext { flex: 1; white-space: nowrap; overflow: hidden; }
.w90 { width: 90px; }
.w158 { width: 158px; }
.w184 { width: 184px; margin-left: 2px; }
.w199 { width: 199px; }
.w200 { width: 200px; }
.w240 { width: 240px; }
.w43 { width: 43px; }
.w40 { width: 40px; }
.w67 { width: 67px; }
.lbl { color: #333; white-space: nowrap; }
.hex { width: 26px; color: #333; margin-top: -1px; }
.over {
  height: 24px;
  align-self: stretch;
  background:
    linear-gradient(#222, #222) center 15px / 5px 1px no-repeat,
    linear-gradient(#c6cdda, #b8c1d1);
  border-radius: 0 2px 2px 0;
}
.over::after {
  content: "";
  display: block;
  width: 0; height: 0;
  margin: 17px auto 0;
  border: 2.5px solid transparent;
  border-top: 3px solid #222;
  border-bottom-width: 0;
}
.ov8 { width: 8px; margin-left: -5px; }
.ov10 { width: 10px; margin-left: -2px; }
.ov9 { width: 9px; margin-left: -4px; }
.ov8b { width: 8px; }
.ov7 { width: 7px; margin-left: -4px; }

/* workspace */
.workspace {
  flex: 1;
  min-height: 0;
  display: flex;
  padding: 6px;
  gap: 6px;
}
.maincol { width: 1529px; display: flex; flex-direction: column; min-height: 0; }
.doctabs { height: 20px; flex: none; display: flex; align-items: stretch; }
.doctab {
  display: flex;
  align-items: center;
  color: #e8edf4;
  padding: 0 6px;
  white-space: nowrap;
}
.doctab.on {
  width: 92px;
  padding: 0 5px;
  justify-content: space-between;
  color: #111;
  background: linear-gradient(#fffdf4, #ffe9ab);
  border-radius: 2px 2px 0 0;
}
.tabx { width: 9px; height: 9px; }
.tri {
  width: 0; height: 0;
  border: 5px solid transparent;
  border-top: 5px solid #dde3ec;
  border-bottom-width: 0;
  align-self: center;
  margin-left: auto;
  margin-right: 6px;
}
.yline { height: 4px; flex: none; background: #ffe8a6; }
.scope { height: 23px; flex: none; display: flex; background: #f1f3f8; border: 1px solid #44506c; border-width: 1px 2px 2px 1px; padding-top: 1px; }
.scopecell { display: flex; align-items: center; padding: 0 4px 0 6px; justify-content: space-between; }
.s1 { width: 761px; border-right: 2px solid #8a94a8; margin-top: -1px; padding-top: 1px; }
.s2 { flex: 1; }

/* editor */
.editor { flex: none; height: 280px; margin-top: -1px; background: #fff; display: flex; flex-direction: column; }
.codepane { height: 263px; display: flex; overflow: hidden; flex: none; }
.lines { flex: 1; margin-top: -13px; min-width: 0; }
.ln {
  display: flex;
  height: 16px;
  font-family: "DejaVu Sans Mono", monospace;
  font-size: 11.6px;
  line-height: 16px;
  color: #000;
}
.mark { width: 17px; height: 16px; background: #f0f0f0; padding: 2px 0 0 2px; }
.cur { width: 14px; height: 12px; }
.num { width: 35px; text-align: right; color: #2b91af; }
.fold { width: 14px; height: 16px; margin: 0 0 0 7px; }
.fold.fl { background: linear-gradient(#a6a6a6, #a6a6a6) 7px 0 / 1px 16px no-repeat; }
.fold.fe { background: linear-gradient(#a6a6a6, #a6a6a6) 7px 0 / 1px 13px no-repeat, linear-gradient(#a6a6a6, #a6a6a6) 7px 12px / 4px 1px no-repeat; }
.foldbox { width: 9px; height: 9px; margin: 4px 0 0 3px; }
.src { white-space: pre; }
.src b { font-weight: normal; color: #0000ff; }
.caret { display: inline-block; width: 1px; height: 15px; background: #000; vertical-align: -3px; }

.vscroll {
  width: 17px;
  flex: none;
  background: #f0f0f0;
  display: flex;
  flex-direction: column;
  align-items: center;
}
.split {
  width: 17px; height: 17px;
  margin-top: 1px;
  background: #d6dbe6;
  border: 1px solid #98a3b8;
  display: flex; align-items: center; justify-content: center;
}
.split svg { width: 12px; height: 14px; }
.chev { width: 10px; height: 6px; margin: 6px 0; }
.thumb { width: 17px; height: 8px; background: #cdcdcd; }
.edfoot { height: 17px; flex: none; display: flex; background: #f0f0f0; }
.zoom { width: 59px; background: #fff; display: flex; align-items: center; justify-content: space-between; padding: 0 4px 0 3px; margin: 1px 0 1px 1px; line-height: 14px; }
.hscroll { flex: 1; display: flex; justify-content: space-between; align-items: center; padding: 0 7px; }
.chevh { width: 6px; height: 10px; }
.corner { width: 17px; background: #fff; }

/* autos */
.autos { flex: 1; margin-top: 6px; min-height: 0; display: flex; flex-direction: column; }
.paneltitle {
  height: 19px;
  flex: none;
  display: flex;
  align-items: center;
  gap: 6px;
  padding: 0 4px 0 2px;
  background: linear-gradient(#4f6386, #3c4e6e);
  color: #e8edf4;
}
.paneltitle span { flex: 1; }
.paneltitle .tri { margin: 0; border-width: 4px; border-bottom-width: 0; }
.pin { width: 9px; height: 11px; }
.px { width: 10px; height: 10px; }
.treewrap { height: 520px; flex: none; display: flex; background: #fff; padding-right: 2px; padding-top: 1px; }
.tree { width: 1510px; flex: none; }
.thead {
  display: flex;
  height: 20px;
  background: #f0f0f0;
  border-bottom: 1px solid #a0a0a0;
  line-height: 19px;
}
.thead span { display: block; padding-left: 5px; border-right: 1px solid #a0a0a0; height: 19px; }
.thead .tn { width: 629px; margin-left: 9px; border-left: 1px solid #a0a0a0; padding-left: 4px; }
.tv { width: 822px; }
.thead .tt { width: 50px; border-right: 0; padding-left: 4px; }
.row {
  display: flex;
  height: 17px;
  border-left: 9px solid #f0f0f0;
  line-height: 16px;
}
.cn, .cv, .ct { border-bottom: 1px solid #a0a0a0; height: 17px; padding-top: 1px; white-space: nowrap; overflow: hidden; display: flex; align-items: center; }
.cn { width: 630px; border-right: 1px solid #a0a0a0; flex: none; font-size: 11.3px; }
.cv { width: 822px; border-right: 1px solid #a0a0a0; flex: none; padding-left: 4px; padding-right: 1px; }
.ct { width: 49px; padding-left: 3px; flex: none; }
.d1 { padding-left: 17px; }
.d2 { padding-left: 34px; }
.ex { width: 15px; height: 16px; padding: 2px 0 0 3px; }
.bx { width: 9px; height: 9px; }
.vi { width: 16px; height: 16px; margin: -1px 3px 0 4px; }
.vt { flex: 1; overflow: hidden; font-size: 11.2px; }
.vt.cjk { font-family: "Noto Sans CJK SC", "Noto Sans", sans-serif; font-size: 11.7px; }
.mg { width: 11px; height: 11px; margin: 0 6px 0 3px; }
.dv { width: 0; height: 0; border: 3px solid transparent; border-top: 3px solid #1a2a9a; border-bottom-width: 0; margin-right: 1px; }
.vscroll.tall { height: 519px; }
.paneltabs { height: 20px; flex: none; display: flex; color: #e8edf4; }
.ptab { display: flex; align-items: center; gap: 5px; padding: 0 5px 1px 6px; }
.ptab.on { background: #fff; color: #111; width: 61px; }
.ptab + .ptab { padding-left: 5px; }
.pi { width: 15px; height: 15px; }

/* sidebar */
.sidebar { width: 30px; flex: none; background: #fff; display: flex; flex-direction: column; height: 895px; }
.sidehead { height: 19px; flex: none; background: #435576; display: flex; align-items: center; justify-content: center; gap: 6px; }
.sidesel { height: 26px; flex: none; background: #b9c4d6; display: flex; align-items: center; justify-content: center; }
.si { width: 16px; height: 16px; }
.sidecv { display: flex; justify-content: flex-end; padding-right: 1px; }
.si2 { width: 20px; height: 18px; background: #d5d5d5; padding: 1px; }
.sidenav { height: 15px; margin: 0 1px 2px; background: #f0f0f0; display: flex; align-items: center; justify-content: space-around; padding: 0 2px; }

/* status */
.status {
  height: 21px;
  flex: none;
  display: flex;
  align-items: center;
  background: #293a58;
  color: #e8edf4;
  padding: 0 0 0 4px;
}
.st-ready { width: 1203px; }
.st { display: block; }
.s-ln { width: 91px; }
.s-col { width: 93px; }
.s-ch { width: 135px; }
.s-ins { width: 38px; }
.st-grip { width: 12px; height: 12px; margin-top: 8px; }
```
